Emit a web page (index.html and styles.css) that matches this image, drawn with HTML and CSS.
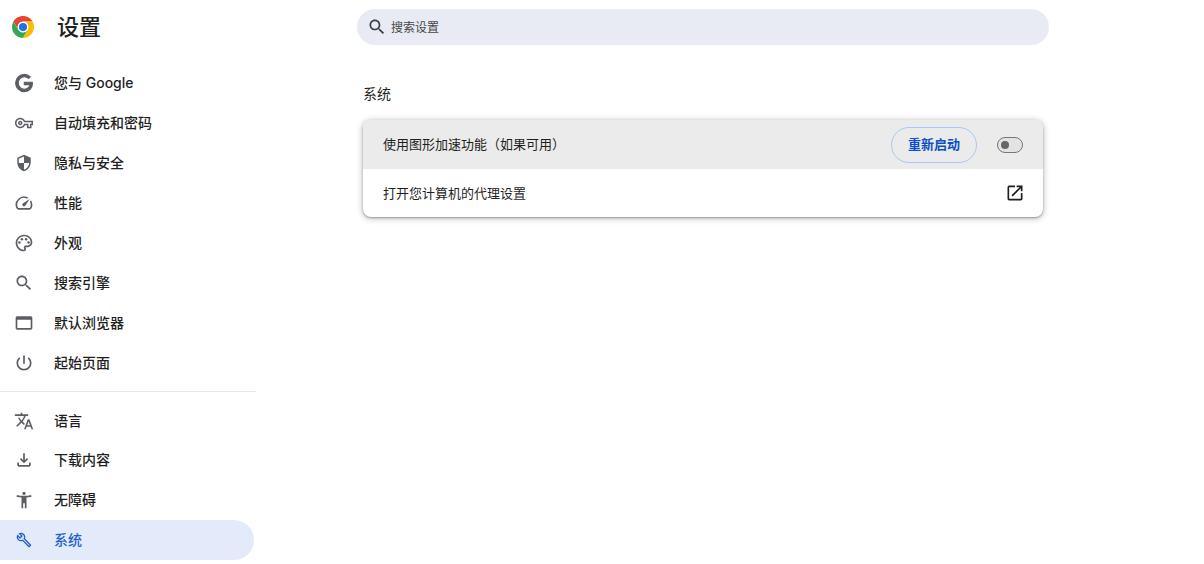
FILE: index.html
```html
<!DOCTYPE html>
<html lang="zh-CN">
<head>
  <meta charset="UTF-8" />
  <meta name="viewport" content="width=device-width, initial-scale=1.0"/>
  <title>设置 - 系统</title>
  <link rel="stylesheet" href="styles.css">
</head>
<body>

  <div class="sidebar">
    <div class="brand">
      <svg class="logo" viewBox="0 0 24 24">
        <path fill="#ea4335" d="M12 0C7.5 0 3.6 2.5 1.6 6l5.2 9A6 6 0 0 1 12 6h10.4C20.3 2.4 16.4 0 12 0z"/>
        <path fill="#34a853" d="M1.6 6c-2.1 3.7-2.1 8.3 0 12 2.1 3.6 5.900 5.900 10.400 6l5.200-9a6 6 0 0 1-10.400 0z"/>
        <path fill="#fbbc04" d="M22.400 6H12a6 6 0 0 1 5.200 9L12 24c6.600 0 12-5.400 12-12 0-2.200-.6-4.200-1.600-6z"/>
        <circle fill="#fff" cx="12" cy="12" r="5.600"/>
        <circle fill="#1a73e8" cx="12" cy="12" r="4.400"/>
      </svg>
      <h1>设置</h1>
    </div>

    <!-- Main nav -->
    <a class="nav-item">
      <svg class="icon icon-bold" viewBox="-2 -2 28 28"><path d="M12.480 10.920v3.280h7.840c-.24 1.840-.853 3.187-1.787 4.133-1.147 1.147-2.933 2.400-6.053 2.400-4.827 0-8.600-3.893-8.600-8.720s3.773-8.720 8.600-8.720c2.600 0 4.507 1.027 5.907 2.347l2.307-2.307C18.747 1.440 16.133 0 12.480 0 5.867 0 .307 5.387.307 12s5.560 12 12.173 12c3.573 0 6.267-1.173 8.373-3.360 2.160-2.160 2.840-5.213 2.840-7.667 0-.76-.053-1.467-.173-2.053H12.480z"/></svg>
      <span>您与 Google</span>
    </a>
    <a class="nav-item">
      <svg class="icon icon-small" viewBox="0 0 24 24"><path d="M22 19h-6v-4h-2.680c-1.140 2.420-3.600 4-6.320 4-3.860 0-7-3.140-7-7s3.140-7 7-7c2.720 0 5.170 1.580 6.320 4H24v6h-2v4zm-4-2h2v-4h2v-2H11.940l-.23-.67C11.010 8.340 9.110 7 7 7c-2.760 0-5 2.240-5 5s2.240 5 5 5c2.110 0 4.010-1.340 4.710-3.330l.23-.67H18v4zM7 15c-1.650 0-3-1.350-3-3s1.350-3 3-3 3 1.350 3 3-1.350 3-3 3zm0-4c-.55 0-1 .45-1 1s.45 1 1 1 1-.45 1-1-.45-1-1-1z"/></svg>
      <span>自动填充和密码</span>
    </a>
    <a class="nav-item">
      <svg class="icon icon-small" viewBox="0 0 24 24"><path d="M12 1L3 5v6c0 5.550 3.840 10.740 9 12 5.160-1.260 9-6.450 9-12V5l-9-4zm0 10.990h7c-.53 4.120-3.280 7.790-7 8.940V12H5V6.300l7-3.110v8.800z"/></svg>
      <span>隐私与安全</span>
    </a>
    <a class="nav-item">
      <svg class="icon" viewBox="0 0 24 24"><path d="M20.380 8.570l-1.230 1.850a8 8 0 0 1-.22 7.580H5.070A8 8 0 0 1 15.580 6.850l1.850-1.230A10 10 0 0 0 3.350 19a2 2 0 0 0 1.720 1h13.850a2 2 0 0 0 1.740-1 10 10 0 0 0-.27-10.440zm-9.790 6.840a2 2 0 0 0 2.830 0l5.660-8.490-8.490 5.660a2 2 0 0 0 0 2.830z"/></svg>
      <span>性能</span>
    </a>
    <a class="nav-item">
      <svg class="icon" viewBox="0 0 24 24">
        <path d="M12 22C6.490 22 2 17.510 2 12S6.490 2 12 2s10 4.040 10 9c0 3.310-2.690 6-6 6h-1.770c-.28 0-.5.22-.5.5 0 .12.05.23.13.33.41.47.64 1.060.64 1.670A2.500 2.500 0 0 1 12 22zm0-18c-4.410 0-8 3.590-8 8s3.590 8 8 8c.28 0 .5-.22.5-.5a.54.54 0 0 0-.14-.35c-.41-.46-.63-1.050-.63-1.650a2.500 2.500 0 0 1 2.500-2.500H16c2.210 0 4-1.790 4-4 0-3.860-3.590-7-8-7z"/>
        <circle cx="6.500" cy="11.500" r="1.500"/><circle cx="9.500" cy="7.500" r="1.500"/><circle cx="14.500" cy="7.500" r="1.500"/><circle cx="17.500" cy="11.500" r="1.500"/>
      </svg>
      <span>外观</span>
    </a>
    <a class="nav-item">
      <svg class="icon" viewBox="0 0 24 24"><path d="M15.500 14h-.79l-.28-.27C15.410 12.590 16 11.110 16 9.500 16 5.910 13.090 3 9.500 3S3 5.910 3 9.500 5.910 16 9.500 16c1.610 0 3.090-.59 4.230-1.570l.27.28v.79l5 4.990L20.490 19l-4.990-5zm-6 0C7.010 14 5 11.990 5 9.500S7.010 5 9.500 5 14 7.010 14 9.500 11.990 14 9.500 14z"/></svg>
      <span>搜索引擎</span>
    </a>
    <a class="nav-item">
      <svg class="icon" viewBox="0 0 24 24"><path d="M20 4H4c-1.110 0-2 .9-2 2v12c0 1.100.89 2 2 2h16c1.100 0 2-.9 2-2V6c0-1.100-.89-2-2-2zm0 14H4V8h16v10z"/></svg>
      <span>默认浏览器</span>
    </a>
    <a class="nav-item">
      <svg class="icon" viewBox="0 0 24 24"><path d="M13 3h-2v10h2V3zm4.830 2.170l-1.420 1.420C17.990 7.860 19 9.810 19 12c0 3.870-3.130 7-7 7s-7-3.130-7-7c0-2.190 1.010-4.140 2.580-5.420L6.170 5.170C4.230 6.820 3 9.260 3 12c0 4.970 4.030 9 9 9s9-4.030 9-9c0-2.740-1.230-5.180-3.170-6.830z"/></svg>
      <span>起始页面</span>
    </a>

    <div class="divider"></div>

    <!-- Advanced nav -->
    <a class="nav-item nav-short">
      <svg class="icon" viewBox="0 0 24 24"><path d="M12.870 15.070l-2.540-2.510.03-.03c1.740-1.940 2.980-4.170 3.710-6.530H17V4h-7V2H8v2H1v1.990h11.170C11.500 7.920 10.440 9.750 9 11.350 8.070 10.320 7.300 9.190 6.690 8h-2c.73 1.630 1.730 3.170 2.980 4.560l-5.090 5.020L4 19l5-5 3.110 3.110.76-2.040zM18.500 10h-2L12 22h2l1.120-3h4.750L21 22h2l-4.500-12zm-2.620 7l1.620-4.330L19.120 17h-3.240z"/></svg>
      <span>语言</span>
    </a>
    <a class="nav-item">
      <svg class="icon" viewBox="0 0 24 24"><path d="M12 16l-5-5 1.400-1.450 2.600 2.600V4h2v8.150l2.600-2.600L17 11l-5 5zM6 20c-.55 0-1.020-.2-1.410-.59S4 18.550 4 18v-3h2v3h12v-3h2v3c0 .55-.2 1.020-.59 1.410S18.550 20 18 20H6z"/></svg>
      <span>下载内容</span>
    </a>
    <a class="nav-item">
      <svg class="icon" viewBox="0 0 24 24"><path d="M20.500 6c-2.610.7-5.670 1-8.500 1s-5.890-.3-8.500-1L3 8c1.860.5 4 .83 6 1v13h2v-6h2v6h2V9c2-.17 4.140-.5 6-1l-.5-2zM12 6c1.100 0 2-.9 2-2s-.9-2-2-2-2 .9-2 2 .9 2 2 2z"/></svg>
      <span>无障碍</span>
    </a>
    <a class="nav-item active">
      <svg class="icon" viewBox="-3 -3 30 30"><path d="M22.610 18.990l-9.080-9.080c.93-2.340.45-5.100-1.440-7C9.790.61 6.210.4 3.660 2.260L7.500 6.110 6.080 7.520 2.250 3.690C.39 6.230.6 9.820 2.900 12.110c1.860 1.860 4.570 2.350 6.890 1.480l9.110 9.110c.39.39 1.020.39 1.410 0l2.300-2.300c.4-.38.4-1.010 0-1.410zm-3 1.600l-9.460-9.460c-.61.45-1.290.72-2 .82-1.360.2-2.790-.21-3.830-1.250C3.370 9.760 2.930 8.500 3 7.260l3.090 3.090 4.240-4.240-3.090-3.090c1.240-.07 2.490.37 3.440 1.310 1.080 1.080 1.490 2.570 1.240 3.960-.12.71-.42 1.370-.88 1.960l9.450 9.450-.88.88z"/></svg>
      <span>系统</span>
    </a>
  </div>

  <div class="main">
    <div class="search-bar">
      <svg class="search-icon" viewBox="0 0 24 24"><path d="M15.500 14h-.79l-.28-.27C15.410 12.590 16 11.110 16 9.500 16 5.910 13.090 3 9.500 3S3 5.910 3 9.500 5.910 16 9.500 16c1.610 0 3.090-.59 4.230-1.570l.27.28v.79l5 4.990L20.490 19l-4.990-5zm-6 0C7.010 14 5 11.990 5 9.500S7.010 5 9.500 5 14 7.010 14 9.500 11.990 14 9.500 14z"/></svg>
      <span class="search-text">搜索设置</span>
    </div>

    <div class="section">
      <h2>系统</h2>
      <div class="card">
        <div class="row row-hover">
          <span class="row-label">使用图形加速功能（如果可用）</span>
          <button type="button" class="restart-btn">重新启动</button>
          <div class="toggle"><div class="knob"></div></div>
        </div>
        <div class="row">
          <span class="row-label">打开您计算机的代理设置</span>
          <svg class="open-icon" viewBox="0 0 24 24"><path d="M19 19H5V5h7V3H5a2 2 0 0 0-2 2v14a2 2 0 0 0 2 2h14c1.100 0 2-.9 2-2v-7h-2v7zM14 3v2h3.590l-9.830 9.830 1.410 1.410L19 6.410V10h2V3h-7z"/></svg>
        </div>
      </div>
    </div>
  </div>

</body>
</html>
```

FILE: styles.css
```css
body {
  font-family: Inter, "Noto Sans CJK SC", sans-serif;
  background-color: #fff;
  color: #1f1f1f;
  margin: 0;
  padding: 0;
  display: flex;
}
.sidebar {
  width: 256px;
  flex-shrink: 0;
}
.brand {
  height: 54px;
  margin-bottom: 9px;
  padding-left: 12px;
  display: flex;
  align-items: center;
}
.logo {
  width: 22px;
  height: 22px;
}
h1 {
  font-size: 22px;
  font-weight: 500;
  margin: 0 0 5px 23px;
}
.nav-item {
  height: 40px;
  width: 254px;
  padding-left: 14px;
  box-sizing: border-box;
  display: flex;
  align-items: center;
  font-size: 14px;
  font-weight: 500;
  border-radius: 0 20px 20px 0;
}
.nav-item span {
  margin-left: 20px;
  padding-bottom: 2px;
}
.nav-short {
  height: 39px;
}
.icon {
  width: 20px;
  height: 20px;
  fill: #5b5e63;
  flex-shrink: 0;
}
.icon-bold {
  stroke: #5b5e63;
  stroke-width: 1.6;
}
/* smaller glyphs keep the 20px slot */
.icon-small {
  width: 18px;
  height: 18px;
  margin: 0 1px;
}
.active {
  background-color: #e3ebfb;
  color: #1f5fd0;
}
.active .icon {
  fill: #1f5fd0;
}
.divider {
  height: 1px;
  background-color: #e8e8e8;
  margin: 8px 0 9px;
}
.main {
  flex: 1;
  padding: 9px 0 0 101px;
}
.search-bar {
  width: 692px;
  height: 36px;
  background-color: #e8ebf4;
  border-radius: 18px;
  padding-left: 10px;
  box-sizing: border-box;
  display: flex;
  align-items: center;
  gap: 4px;
  font-size: 12px;
  color: #474747;
}
.search-icon {
  width: 20px;
  height: 20px;
  fill: #3c4043;
}
.search-text {
  padding-bottom: 2px;
}
.section {
  width: 680px;
  margin: 39px 0 0 6px;
}
h2 {
  font-size: 14px;
  font-weight: 400;
  line-height: 20px;
  margin: 0 0 16px;
}
.card {
  background-color: #fff;
  border-radius: 8px;
  overflow: hidden;
  box-shadow: 0 1px 2px rgba(0,0,0,0.3), 0 1px 6px 1px rgba(0,0,0,0.22);
}
.row {
  height: 48px;
  padding: 0 20px;
  display: flex;
  align-items: center;
  font-size: 13px;
}
.row-hover {
  height: 49px;
  background-color: #ebebeb;
}
.row-label {
  flex: 1;
  padding-bottom: 2px;
}
.restart-btn {
  width: 86px;
  height: 36px;
  margin-right: 20px;
  padding: 0 0 2px;
  background: none;
  border: 1px solid #a8c7fa;
  border-radius: 18px;
  font-family: inherit;
  font-size: 13px;
  font-weight: 700;
  color: #0b50c8;
}
.toggle {
  width: 26px;
  height: 16px;
  box-sizing: border-box;
  border: 1px solid #747775;
  border-radius: 8px;
  background-color: #e3e3e3;
  display: flex;
  align-items: center;
  padding-left: 3px;
}
.knob {
  width: 8px;
  height: 8px;
  border-radius: 50%;
  background-color: #666;
}
.open-icon {
  width: 20px;
  height: 20px;
  margin-right: -2px;
  fill: #1f1f1f;
}
```
